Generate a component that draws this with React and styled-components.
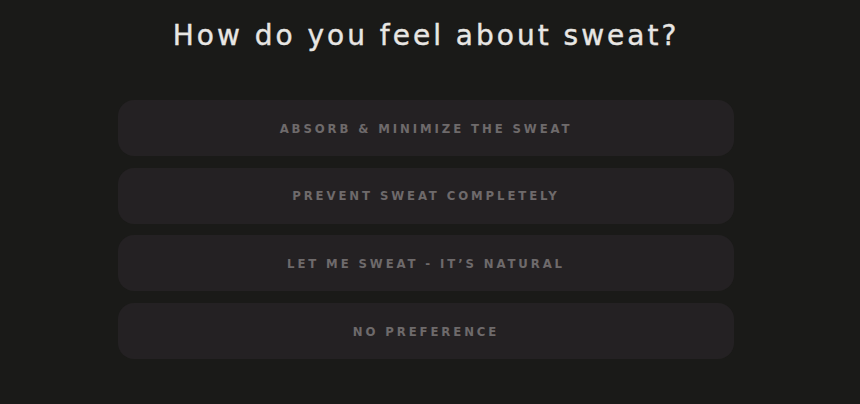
import React from "react";
import styled, { createGlobalStyle } from "styled-components";

const Global = createGlobalStyle`
  html, body { margin: 0; padding: 0; background: #1a1a18; }
  body { width: 860px; height: 404px; overflow: hidden; }
`;

const Page = styled.main`
  box-sizing: border-box;
  width: 860px;
  height: 404px;
  padding: 18px 8px 0 0;
  display: flex;
  flex-direction: column;
  align-items: center;
  background: #1a1a18;
  font-family: "DejaVu Sans", "Liberation Sans", sans-serif;
`;

const Title = styled.h1`
  margin: 0;
  font-size: 28px;
  font-weight: 500;
  line-height: 36px;
  letter-spacing: 3px;
  color: #e8e6e3;
  -webkit-text-stroke: 0.4px #e8e6e3;
`;

const Options = styled.div`
  margin-top: 46px;
  width: 616px;
  display: flex;
  flex-direction: column;
  gap: 11.7px;
`;

const Option = styled.button`
  height: 56px;
  border: none;
  border-radius: 16px;
  background: #242123;
  color: #6e6a6b;
  font-family: "DejaVu Sans Condensed", "DejaVu Sans", sans-serif;
  font-weight: 700;
  font-size: 13px;
  letter-spacing: 2.9px;
  text-transform: uppercase;
  cursor: pointer;
  padding: 0;
`;

const options = [
  "Absorb & minimize the sweat",
  "Prevent sweat completely",
  "Let me sweat - it’s natural",
  "No preference",
];

export default function App() {
  return (
    <>
      <Global />
      <Page>
        <Title>How do you feel about sweat?</Title>
        <Options>
          {options.map((o) => (
            <Option key={o}>{o}</Option>
          ))}
        </Options>
      </Page>
    </>
  );
}
